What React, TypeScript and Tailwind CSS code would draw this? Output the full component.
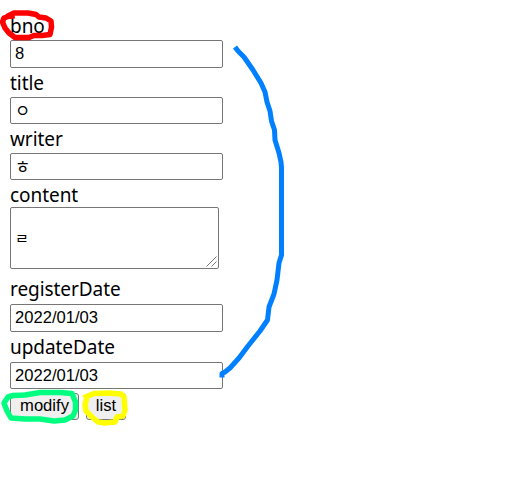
import { useState } from "react";

const labelStyle =
  "flex items-end font-['Noto_Sans','Noto_Sans_CJK_KR',sans-serif] text-[19px] tracking-[-0.06px] text-black";
const boxStyle =
  "block w-[213px] rounded-[2px] border border-[#767676] bg-white px-1 font-['Liberation_Sans','Noto_Sans_CJK_KR',sans-serif] text-[16.6px] leading-5 text-black outline-none";
const buttonStyle =
  "h-[27px] rounded-[3px] border border-[#767676] bg-[#efefef] pb-0.5 font-['Liberation_Sans',sans-serif] text-[16.6px] leading-5 text-black";

interface FieldProps {
  name: string;
  initial: string;
  labelClass: string;
  inputClass: string;
}

function Field({ name, initial, labelClass, inputClass }: FieldProps) {
  const [value, setValue] = useState(initial);
  return (
    <div>
      <label htmlFor={name} className={`${labelStyle} leading-[26px] ${labelClass}`}>
        {name}
      </label>
      <input
        id={name}
        value={value}
        onChange={(e) => setValue(e.target.value)}
        className={`${boxStyle} ${inputClass}`}
      />
    </div>
  );
}

function Annotations() {
  return (
    <svg
      className="pointer-events-none absolute top-0 left-0"
      width="527"
      height="485"
      viewBox="0 0 527 485"
      fill="none"
      strokeLinejoin="round"
      strokeLinecap="square"
    >
      <path
        stroke="#ff0000"
        strokeWidth="5.5"
        d="M9 15.5 L14 13 L28 13 L36 14.5 L39 17 L46 18 L51 21 L51.5 27 L50 34.5 L42 35.5 L34 35.5 L29 37.5 L15 37.5 L9 33 L5 28 L2.5 22 L4 18 L8 16.5 L12 16"
      />
      <path
        stroke="#0080ff"
        strokeWidth="5"
        d="M236.5 49 L238 51 L244 57 L253 70 L261 83 L265 92 L267 102 L270 111 L271.5 121 L274.5 130 L275 140 L279 153 L281 162 L281.5 168 L281.5 255 L279 263 L277 280 L274 294 L269 307 L267.5 320 L260 331 L248 346 L239 358 L230 368 L225 372 L222 373.5 V375"
      />
      <path
        stroke="#00ff80"
        strokeWidth="5.5"
        d="M73 396 L72 393.5 L60 392.5 L40 392.5 L25 395 L13 395.5 L8 397 L4 403 L7 411 L11 418 L25 419 L40 419 L54 421 L65 420 L73 416 L75.5 410 L75.5 402 L73 396"
      />
      <path
        stroke="#ffff00"
        strokeWidth="5.5"
        d="M86 397 L94 393.5 L108 393 L121 394 L124 397 L125 410 L123 416 L117 417 L115 422 L105 423 L98 422 L92 417 L86 411 L85 405 L87 397"
      />
    </svg>
  );
}

export default function App() {
  const [content, setContent] = useState("\nㄹ");
  return (
    <main className="relative h-[485px] w-[527px] overflow-hidden bg-white">
      <form className="pl-[10px]" onSubmit={(e) => e.preventDefault()}>
        <Field name="bno" initial="8" labelClass="h-10 pb-px" inputClass="h-7" />
        <Field name="title" initial="ㅇ" labelClass="h-[29px] pb-px" inputClass="h-[27px] pb-0.5" />
        <Field name="writer" initial="ㅎ" labelClass="h-[29px] pb-px" inputClass="h-[27px] pb-0.5" />
        <label htmlFor="content" className={`${labelStyle} h-[27px] leading-[24px]`}>
          content
        </label>
        <div className="relative w-[209px]">
          <textarea
            id="content"
            value={content}
            onChange={(e) => setContent(e.target.value)}
            className="block h-[62px] w-[209px] resize-none rounded-[2px] border border-[#767676] bg-white px-1 py-[3px] font-['Liberation_Mono','Noto_Sans_CJK_KR',monospace] text-[15px] leading-[20px] text-black outline-none"
          />
          <svg
            className="pointer-events-none absolute right-[2px] bottom-[2px]"
            width="11"
            height="11"
            viewBox="0 0 11 11"
            stroke="#767676"
            fill="none"
          >
            <path d="M0.5 10.5 L10.5 0.5 M5.5 10.5 L10.5 5.5" />
          </svg>
        </div>
        <Field name="registerDate" initial="2022/01/03" labelClass="h-[35px] pb-0.5" inputClass="h-7" />
        <Field name="updateDate" initial="2022/01/03" labelClass="h-[30px] pb-0.5" inputClass="h-[27px]" />
        <div className="flex gap-[7px] pt-1">
          <button className={`${buttonStyle} w-[69px]`}>modify</button>
          <button className={`${buttonStyle} w-[40px]`}>list</button>
        </div>
      </form>
      <Annotations />
    </main>
  );
}
